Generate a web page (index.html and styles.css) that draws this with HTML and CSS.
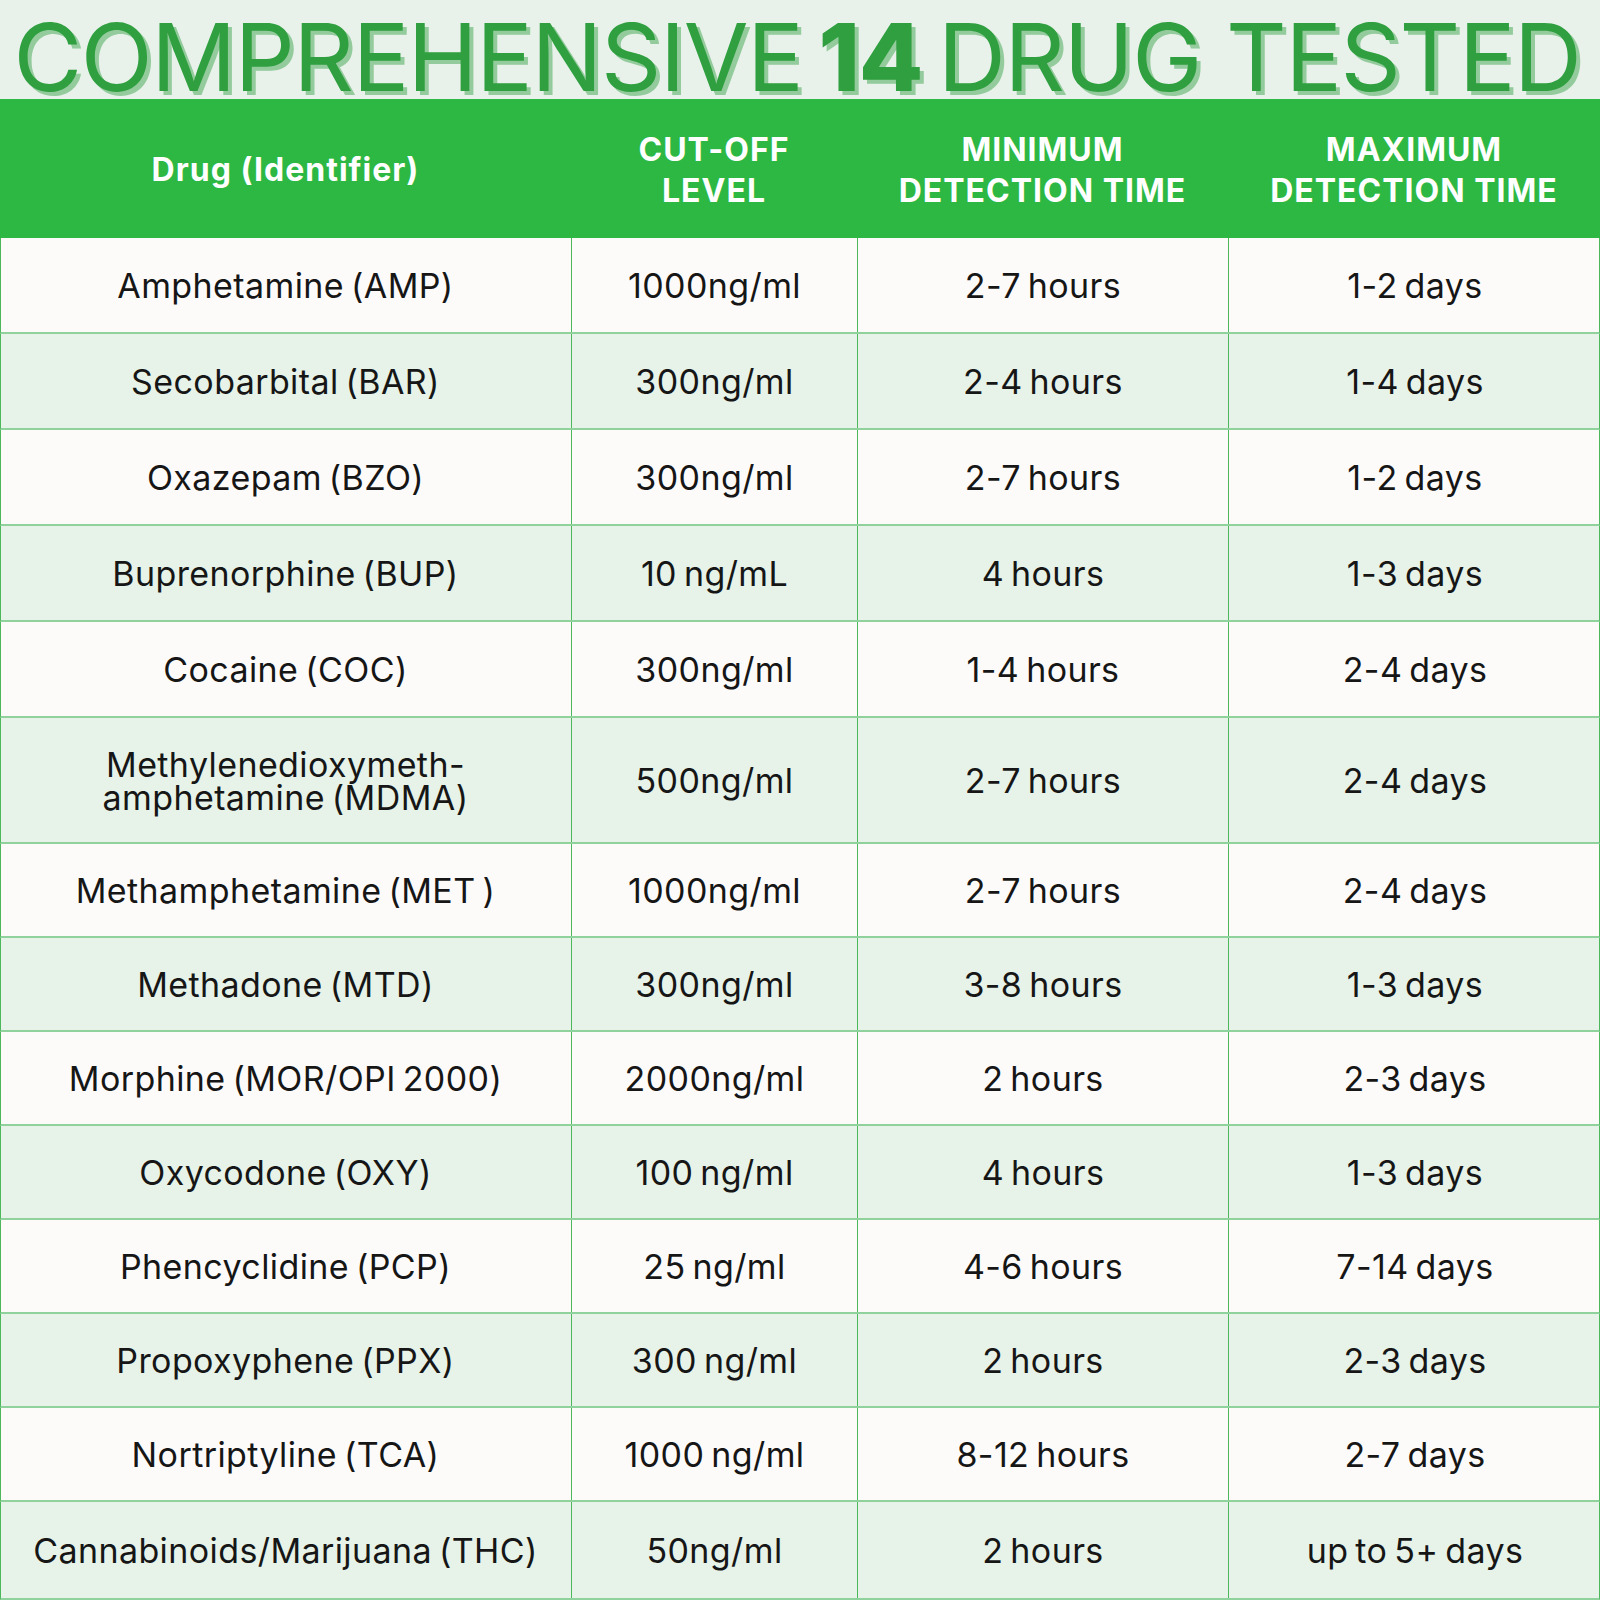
FILE: index.html
```html
<!DOCTYPE html>
<html lang="en">
<head>
<meta charset="utf-8">
<title>Comprehensive 14 Drug Tested</title>
<link rel="stylesheet" href="styles.css">
</head>
<body>
<div class="page">
  <h1 class="title">COMPREHENSIVE <b>14</b> DRUG TESTED</h1>
  <div class="table">
    <div class="head">
      <div class="hcell hsingle">Drug (Identifier)</div>
      <div class="hcell">CUT-OFF<br>LEVEL</div>
      <div class="hcell">MINIMUM<br>DETECTION TIME</div>
      <div class="hcell">MAXIMUM<br>DETECTION TIME</div>
    </div>
    <div class="body">
      <div class="row odd"><div class="cell">Amphetamine (AMP)</div><div class="cell">1000ng/ml</div><div class="cell">2-7 hours</div><div class="cell">1-2 days</div></div>
      <div class="row even"><div class="cell">Secobarbital (BAR)</div><div class="cell">300ng/ml</div><div class="cell">2-4 hours</div><div class="cell">1-4 days</div></div>
      <div class="row odd"><div class="cell">Oxazepam (BZO)</div><div class="cell">300ng/ml</div><div class="cell">2-7 hours</div><div class="cell">1-2 days</div></div>
      <div class="row even"><div class="cell">Buprenorphine (BUP)</div><div class="cell">10 ng/mL</div><div class="cell">4 hours</div><div class="cell">1-3 days</div></div>
      <div class="row odd"><div class="cell">Cocaine (COC)</div><div class="cell">300ng/ml</div><div class="cell">1-4 hours</div><div class="cell">2-4 days</div></div>
      <div class="row even tall"><div class="cell two">Methylenedioxymeth-<br>amphetamine (MDMA)</div><div class="cell">500ng/ml</div><div class="cell">2-7 hours</div><div class="cell">2-4 days</div></div>
      <div class="row odd"><div class="cell">Methamphetamine (MET )</div><div class="cell">1000ng/ml</div><div class="cell">2-7 hours</div><div class="cell">2-4 days</div></div>
      <div class="row even"><div class="cell">Methadone (MTD)</div><div class="cell">300ng/ml</div><div class="cell">3-8 hours</div><div class="cell">1-3 days</div></div>
      <div class="row odd"><div class="cell">Morphine (MOR/OPI 2000)</div><div class="cell">2000ng/ml</div><div class="cell">2 hours</div><div class="cell">2-3 days</div></div>
      <div class="row even"><div class="cell">Oxycodone (OXY)</div><div class="cell">100 ng/ml</div><div class="cell">4 hours</div><div class="cell">1-3 days</div></div>
      <div class="row odd"><div class="cell">Phencyclidine (PCP)</div><div class="cell">25 ng/ml</div><div class="cell">4-6 hours</div><div class="cell">7-14 days</div></div>
      <div class="row even"><div class="cell">Propoxyphene (PPX)</div><div class="cell">300 ng/ml</div><div class="cell">2 hours</div><div class="cell">2-3 days</div></div>
      <div class="row odd"><div class="cell">Nortriptyline (TCA)</div><div class="cell">1000 ng/ml</div><div class="cell">8-12 hours</div><div class="cell">2-7 days</div></div>
      <div class="row even last"><div class="cell">Cannabinoids/Marijuana (THC)</div><div class="cell">50ng/ml</div><div class="cell">2 hours</div><div class="cell">up to 5+ days</div></div>
    </div>
  </div>
</div>
</body>
</html>
```
FILE: styles.css
```css
* { box-sizing: border-box; }
html, body { margin: 0; padding: 0; }
body {
  background: #e8f2ea;
  font-family: Inter, "Open Sans", sans-serif;
  color: #161616;
}
.page { width: 1600px; height: 1600px; overflow: hidden; }

.title {
  margin: 0;
  height: 99px;
  display: flex;
  justify-content: center;
  align-items: flex-start;
  padding-top: 10px;
  padding-right: 6px;
  font-size: 94px;
  line-height: 94px;
  font-weight: 400;
  color: #2f9f3f;
  letter-spacing: -1.35px;
  white-space: nowrap;
  text-shadow: 4px 4px 0 #93cb9c;
}
.title b { font-weight: 800; margin: 0 16px; }

.head {
  display: grid;
  grid-template-columns: 571px 286px 371px 372px;
  height: 139px;
  background: #2cb843;
  color: #ffffff;
  font-weight: 700;
  font-size: 32px;
  line-height: 41px;
  letter-spacing: 1px;
}
.hcell {
  display: flex;
  align-items: center;
  justify-content: center;
  text-align: center;
  padding-top: 2px;
}

.row {
  display: grid;
  grid-template-columns: 571px 286px 371px 372px;
  height: 94px;
  border-bottom: 2px solid #90d29b;
  border-left: 1px solid #4cb85b;
  border-right: 1px solid #4cb85b;
  font-size: 34px;
  line-height: 32px;
  letter-spacing: 0.4px;
  word-spacing: -3px;
}
.row:nth-child(-n+5) { height: 96px; }
.row.tall { height: 126px; }
.row.last { height: 98px; }
.odd { background: #fdfbfa; }
.even { background: #e7f3e9; }

.cell {
  display: flex;
  align-items: center;
  justify-content: center;
  text-align: center;
  border-right: 1px solid #4cb85b;
  padding-top: 2px;
}
.cell:first-child { margin-left: -1px; }
.cell:last-child { border-right: none; }
.cell.two { line-height: 33px; }
```
